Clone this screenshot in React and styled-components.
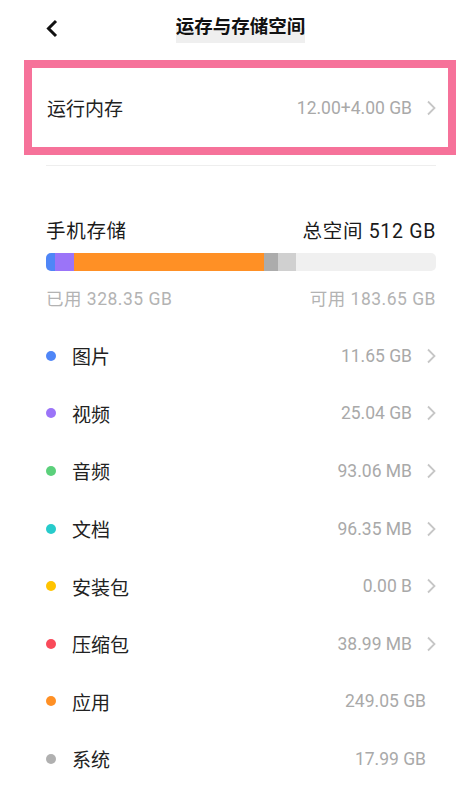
import styled, { createGlobalStyle } from 'styled-components';

const GlobalStyle = createGlobalStyle`
  body {
    margin: 0;
    background: #fff;
    font-family: Roboto, "Noto Sans", "Noto Sans CJK SC", sans-serif;
  }
`;

const Page = styled.div`
  width: 471px;
  height: 786px;
  overflow: hidden;
  background: #fff;
`;

const Header = styled.header`
  position: relative;
  height: 58px;
  display: flex;
  align-items: center;
  justify-content: center;
  padding-left: 10px;
`;

const Back = styled.svg`
  position: absolute;
  left: 44px;
  top: 19px;
  width: 16px;
  height: 19px;
`;

const Title = styled.h1`
  margin: 0;
  font-size: 18.5px;
  font-weight: 700;
  color: #111;
  line-height: 23px;
  padding-bottom: 4px;
  background: linear-gradient(to bottom, transparent 12px, #efefef 12px);
`;

const Highlight = styled.section`
  margin: 2px 15px 0 24px;
  border: 8px solid #f6729a;
  height: 79px;
  display: flex;
  align-items: center;
  padding: 0 12px 0 15px;
`;

const RowLabel = styled.span`
  flex: 1;
  font-size: 19px;
  color: #222;
`;

const Value = styled.span`
  font-size: 17.5px;
  color: #a9a9a9;
  margin-right: ${(p) => (p.$plain ? '10px' : '0')};
`;

const Chevron = styled.svg`
  width: 10px;
  height: 16px;
  margin-left: 14px;
  flex-shrink: 0;
`;

const Divider = styled.div`
  margin: 10px 35px 0 46px;
  height: 1px;
  background: #eeeeee;
`;

const Storage = styled.section`
  padding: 50px 35px 0 46px;
`;

const SummaryRow = styled.div`
  display: flex;
  justify-content: space-between;
  align-items: center;
  color: ${(p) => (p.$muted ? '#b3b3b3' : '#1a1a1a')};
  font-size: ${(p) => (p.$muted ? '17.5px' : '19.5px')};
  letter-spacing: ${(p) => (p.$muted ? '0.5px' : '0.7px')};
  height: 26px;
`;

const Bar = styled.div`
  display: flex;
  height: 18px;
  border-radius: 5px;
  overflow: hidden;
  background: #f0f0f0;
  margin: 11px 0 13px;
`;

const Segment = styled.div`
  height: 100%;
  background: ${(p) => p.$color};
`;

const List = styled.ul`
  list-style: none;
  margin: 17px 0 0;
  padding: 0 35px 0 46px;
`;

const Item = styled.li`
  display: flex;
  align-items: center;
  height: 57.6px;
`;

const Dot = styled.span`
  width: 10px;
  height: 10px;
  border-radius: 50%;
  background: ${(p) => p.$color};
  margin-right: 16px;
  flex-shrink: 0;
`;

const ChevronIcon = () => (
  <Chevron viewBox="0 0 10 16">
    <path d="M2 1.5 L8.5 8 L2 14.5" fill="none" stroke="#c6c6c6" strokeWidth="1.8" />
  </Chevron>
);

const segments = [
  { color: '#4f86f7', width: 9 },
  { color: '#9b74f8', width: 19 },
  { color: '#ff9025', width: 190 },
  { color: '#acacac', width: 14 },
  { color: '#d0d0d0', width: 18 },
];

const items = [
  { name: '图片', size: '11.65 GB', color: '#4f86f7', link: true },
  { name: '视频', size: '25.04 GB', color: '#9b74f8', link: true },
  { name: '音频', size: '93.06 MB', color: '#5bd07b', link: true },
  { name: '文档', size: '96.35 MB', color: '#27cbcb', link: true },
  { name: '安装包', size: '0.00 B', color: '#ffc400', link: true },
  { name: '压缩包', size: '38.99 MB', color: '#f94a5a', link: true },
  { name: '应用', size: '249.05 GB', color: '#ff9025', link: false },
  { name: '系统', size: '17.99 GB', color: '#b0b0b0', link: false },
];

export default function App() {
  return (
    <Page>
      <GlobalStyle />
      <Header>
        <Back viewBox="0 0 16 19">
          <path d="M12 2 L4.5 9.5 L12 17" fill="none" stroke="#111" strokeWidth="3" />
        </Back>
        <Title>运存与存储空间</Title>
      </Header>
      <Highlight>
        <RowLabel>运行内存</RowLabel>
        <Value>12.00+4.00 GB</Value>
        <ChevronIcon />
      </Highlight>
      <Divider />
      <Storage>
        <SummaryRow>
          <span>手机存储</span>
          <span>总空间 512 GB</span>
        </SummaryRow>
        <Bar>
          {segments.map((s) => (
            <Segment key={s.color} $color={s.color} style={{ width: s.width }} />
          ))}
        </Bar>
        <SummaryRow $muted>
          <span>已用 328.35 GB</span>
          <span>可用 183.65 GB</span>
        </SummaryRow>
      </Storage>
      <List>
        {items.map((item) => (
          <Item key={item.name}>
            <Dot $color={item.color} />
            <RowLabel>{item.name}</RowLabel>
            <Value $plain={!item.link}>{item.size}</Value>
            {item.link && <ChevronIcon />}
          </Item>
        ))}
      </List>
    </Page>
  );
}
